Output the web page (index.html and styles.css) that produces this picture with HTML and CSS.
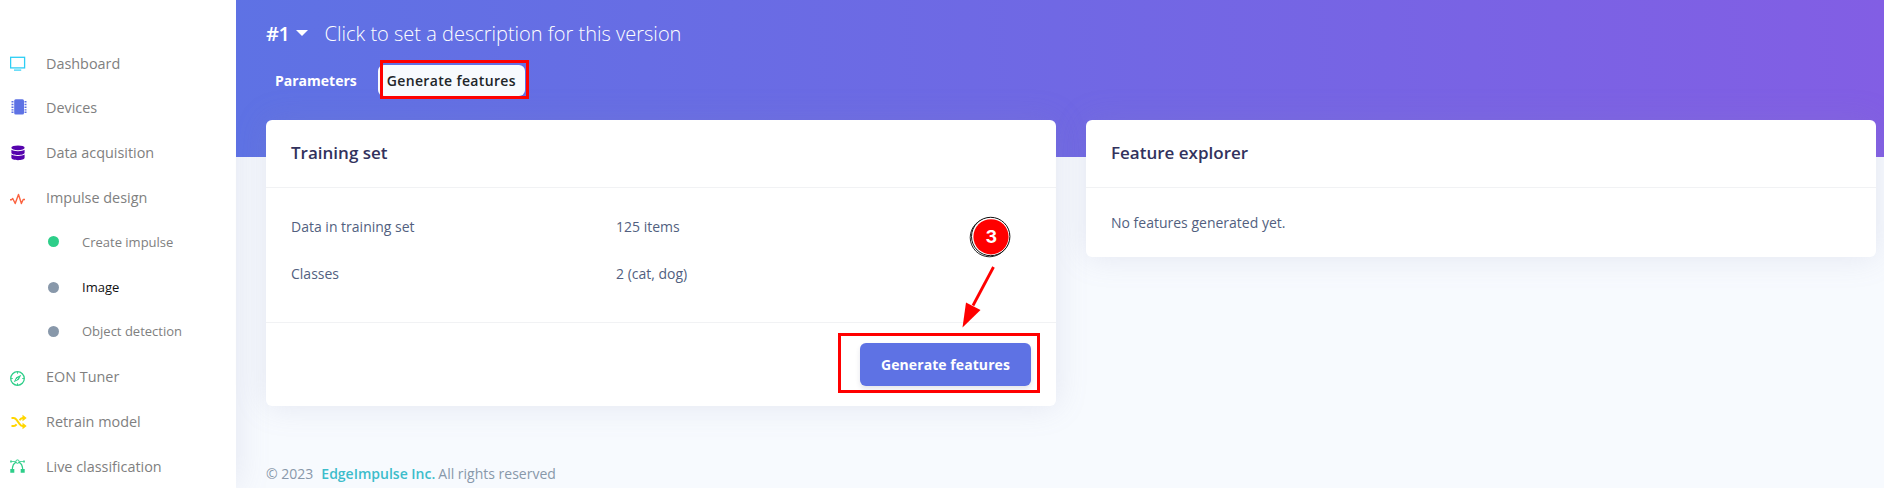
FILE: index.html
```html
<!DOCTYPE html>
<html lang="en">
<head>
<meta charset="utf-8">
<title>Image - Generate features</title>
<link rel="stylesheet" href="styles.css">
</head>
<body>
<nav class="sidebar">
  <a class="item"><svg class="icon drop" viewBox="0 0 16 16" fill="none" stroke="#2dcef5"><rect x=".6" y="1.3" width="14" height="10.6" stroke-width="1.3"/><path d="M4 14.1h7.2" stroke-width="1.2"/></svg><span>Dashboard</span></a>
  <a class="item raised"><svg class="icon shift" viewBox="0 0 16 16" fill="#5e72e4"><rect x="3.2" y=".3" width="9.8" height="15.2" rx="1.5"/><path d="M.5 2.800h2M.5 5.500h2M.5 8.200h2M.5 10.900h2M.5 13.200h2M13.500 2.800h2M13.500 5.500h2M13.500 8.200h2M13.500 10.900h2M13.500 13.200h2" stroke="#5e72e4" stroke-width="1.4"/></svg><span>Devices</span></a>
  <a class="item"><svg class="icon" viewBox="0 0 16 16" fill="#5603ad"><ellipse cx="8" cy="2.8" rx="6.6" ry="2.4"/><path d="M1.4 4.8c2 1.8 11.200 1.800 13.200 0v3c0 3-13.200 3-13.200 0zM1.400 9.600c2 1.800 11.200 1.800 13.200 0v3.200c0 3.200-13.200 3.200-13.200 0z"/></svg><span>Data acquisition</span></a>
  <a class="item"><svg class="icon drop" viewBox="0 0 16 16" fill="none" stroke="#fb6340" stroke-width="1.4" stroke-linejoin="round"><path d="M0 8.700h1.500l1.200-1.200 2.500 5 3.300-9 2.900 9 1.800-4h1.800"/></svg><span>Impulse design</span></a>
  <a class="item sub raised"><i class="dot done"></i><span>Create impulse</span></a>
  <a class="item sub active"><i class="dot"></i><span>Image</span></a>
  <a class="item sub raised"><i class="dot"></i><span>Object detection</span></a>
  <a class="item"><svg class="icon low" viewBox="0 0 16 16" fill="none" stroke="#2dce89"><circle cx="7.500" cy="7.500" r="6.800" stroke-width="1.300"/><path d="M7.500 1v1.800M7.500 12.200v1.800M1 7.500h1.800M12.200 7.500h1.800" stroke-width=".9"/><path d="M11.300 3.700 8.800 8.800 3.700 11.300 6.200 6.200z" fill="#2dce89" stroke="none"/><path d="M8.200 6.800 5.800 9.200" stroke="#fff" stroke-width=".8"/></svg><span>EON Tuner</span></a>
  <a class="item"><svg class="icon shift" viewBox="0 0 16 16" fill="none" stroke="#ffd600" stroke-width="2"><path d="M.5 4h2.300c1.400 0 2 .9 3 2.200l1.400 1.900 1.500 2c.9 1.200 1.500 1.900 3 1.900h1.500M.5 12h2.300c1.400 0 2-.7 2.800-1.700M8.500 6.200C9.500 4.700 10.200 4 11.700 4h1.500"/><path d="M11.500.800 15.700 4l-4.200 3.200zM11.500 8.800l4.200 3.200-4.200 3.200z" fill="#ffd600" stroke="none"/></svg><span>Retrain model</span></a>
  <a class="item"><svg class="icon" viewBox="0 0 16 16" fill="none" stroke="#2dce89"><path d="M2.300 11.300c0-4.500 1.700-7.300 4-8.200M12.700 11.300c0-4.500-1.700-7.300-4-8.200" stroke-width="1.300"/><path d="M1.500 2.500h4M9.500 2.500h4" stroke-width=".8"/><path d="M.2 1.600h1.600v1.800H.2zM13.200 1.600h1.600v1.800h-1.600zM.3 10h4v3.800h-4zM10.700 10h4v3.800h-4z" fill="#2dce89" stroke="none"/><circle cx="7.500" cy="2.600" r="1.700" stroke-width="1"/></svg><span>Live classification</span></a>
</nav>
<main class="main">
  <header class="hero">
    <div class="title"><span class="version">#1</span><i class="caret"></i><span class="desc">Click to set a description for this version</span></div>
    <div class="tabs"><a class="tab">Parameters</a><a class="tab selected">Generate features<i class="outline"></i></a></div>
  </header>
  <div class="cards">
    <section class="card">
      <h2>Training set</h2>
      <div class="stats">
        <span>Data in training set</span><span>125 items</span>
        <span>Classes</span><span>2 (cat, dog)</span>
      </div>
      <div class="actions"><a class="button">Generate features<i class="outline"></i></a></div>
      <svg class="callout" viewBox="0 0 60 120">
        <circle cx="26.500" cy="21.500" r="19.300" fill="#fff" stroke="#111" stroke-width=".9"/>
        <circle cx="27.700" cy="20.500" r="19.200" fill="#fff" stroke="#111" stroke-width="1"/>
        <circle cx="28" cy="20.800" r="17.600" fill="#f00"/>
        <text x="28.200" y="27.300" text-anchor="middle">3</text>
        <path d="M30.500 51 10 89.500" stroke="#f00" stroke-width="2.800"/>
        <path d="M-.5 111.500 3 86.500 17.500 94z" fill="#f00"/>
      </svg>
    </section>
    <section class="card">
      <h2>Feature explorer</h2>
      <p class="empty">No features generated yet.</p>
    </section>
  </div>
  <footer class="footer"><span>© 2023</span><b>EdgeImpulse Inc.</b><span>All rights reserved</span></footer>
</main>
</body>
</html>
```
FILE: styles.css
```css
* { box-sizing: border-box; }
body {
  margin: 0;
  height: 488px;
  overflow: hidden;
  display: flex;
  background: #f7fafe;
  font-family: "Open Sans", sans-serif;
  font-size: 14px;
  color: #525f7f;
}
.sidebar {
  width: 236px;
  height: 488px;
  flex: none;
  padding-top: 41px;
  overflow: hidden;
  background: #fff;
  box-shadow: 0 0 32px rgba(136, 136, 180, .18);
}
.item {
  display: flex;
  align-items: center;
  height: 44.8px;
  padding-left: 10px;
  color: #808080;
  font-size: 14.4px;
  white-space: nowrap;
}
.raised { position: relative; top: -1px; }
.icon { width: 16px; height: 16px; margin-right: 20px; flex: none; }
.icon.shift { position: relative; left: 1px; }
.icon.drop { position: relative; top: 1px; }
.icon.low { position: relative; top: 2px; }
.sub { padding-left: 47.500px; font-size: 13px; }
.dot { width: 11px; height: 11px; margin-right: 23.500px; border-radius: 50%; background: #8898aa; }
.dot.done { background: #2dce89; }
.active { color: #111; }
.main { flex: 1; min-width: 0; }
.hero {
  height: 157px;
  padding: 17px 30px 0;
  background: linear-gradient(87deg, #5e72e4 0, #825ee4 100%);
  color: #fff;
}
.title { display: flex; align-items: center; height: 32px; font-size: 20px; }
.version { font-weight: 600; letter-spacing: -.4px; }
.caret { margin: 0 16.500px 0 6.500px; border: 6px solid transparent; border-top-color: #fff; border-bottom: 0; }
.desc { font-weight: 300; }
.tabs { display: flex; margin-top: 16px; gap: 12px; }
.tab {
  height: 31px;
  padding: 0 9px;
  line-height: 31px;
  font-size: 14px;
  font-weight: 700;
  border-radius: 6px;
  white-space: nowrap;
}
.tab.selected {
  position: relative;
  background: #f7fafe;
  color: #212529;
  font-weight: 600;
  letter-spacing: .35px;
}
.outline { position: absolute; border: 3px solid #f00; }
.tab .outline { inset: -5px -4px -3px 2px; }
.cards {
  display: grid;
  grid-template-columns: 789.500px 789.500px;
  gap: 30.500px;
  align-items: start;
  margin-top: -37px;
  padding-left: 30px;
}
.card {
  position: relative;
  background: #fff;
  border-radius: 6px;
  box-shadow: 0 0 32px rgba(136, 136, 180, .18);
}
.card h2 {
  margin: 0;
  height: 68px;
  padding: 0 25px;
  border-bottom: 1px solid #f1f2f4;
  line-height: 66px;
  font-size: 17px;
  font-weight: 600;
  color: #32325d;
}
.stats {
  display: grid;
  grid-template-columns: 325px 1fr;
  grid-auto-rows: 47px;
  align-items: center;
  height: 134px;
  padding: 15px 25px 0;
}
.actions {
  display: flex;
  justify-content: flex-end;
  height: 84px;
  padding: 20px 24.500px 0;
  border-top: 1px solid #f1f2f4;
}
.button {
  position: relative;
  width: 171px;
  height: 43px;
  border-radius: 6px;
  background: #5e72e4;
  color: #fff;
  line-height: 43px;
  text-align: center;
  font-weight: 700;
  letter-spacing: .07px;
  box-shadow: 0 3px 5px rgba(50, 50, 93, .12);
}
.button .outline { inset: -10px -9px -7px -22px; }
.callout { position: absolute; left: 697px; top: 95.500px; width: 60px; height: 120px; overflow: visible; }
.callout text { fill: #fff; font: 700 18px Inter, sans-serif; }
.empty { margin: 0; height: 69px; padding: 0 25px; line-height: 69px; }
.footer { display: flex; padding: 58px 30px 0; line-height: 20px; color: #8898aa; }
.footer b { margin: 0 3px 0 8px; color: #3dbdcb; font-weight: 600; }
```
